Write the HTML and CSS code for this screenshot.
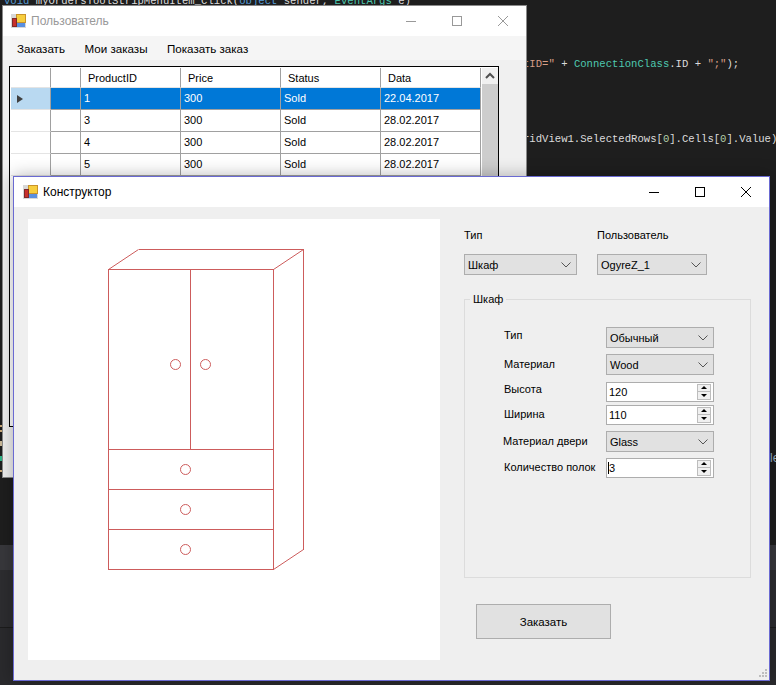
FILE: index.html
```html
<!DOCTYPE html>
<html>
<head>
    <meta charset="utf-8">
    <link rel="stylesheet" href="styles.css">
</head>
<body>
    <div class="editor">
        <div class="code-line top-line"><span class="kw">void</span> myOrdersToolStripMenuItem_Click(<span class="kw">object</span> sender, <span class="type">EventArgs</span> e)</div>
        <div class="code-line line-a"><span class="str">tID="</span> + <span class="type">ConnectionClass</span>.ID + <span class="str">";"</span>);</div>
        <div class="code-line line-b">ridView1.SelectedRows[<span class="num">0</span>].Cells[<span class="num">0</span>].Value)</div>
    </div>
    <div class="band band-tab"></div>
    <div class="band band-mid"></div>
    <div class="band band-low"></div>

    <i class="mark mark-a"></i>
    <i class="mark mark-b"></i>
    <i class="mark mark-c"></i>
    <i class="mark mark-d"></i>
    <i class="mark mark-e"></i>
    <div class="side-text">le</div>

    <!-- back window -->
    <div class="window user-window">
        <div class="titlebar">
            <svg class="app-icon" width="16" height="16" viewBox="0 0 16 16">
                <rect x="0" y="1" width="15" height="14" fill="#d8d8d8"/>
                <rect x="5.500" y="1.500" width="9" height="8" fill="#f7ce3e" stroke="#c9932a"/>
                <rect x="1.500" y="5.500" width="4" height="8" fill="#c8302c" stroke="#7d2a2a"/>
                <rect x="6" y="10" width="8" height="4" fill="#5a8fe0"/>
            </svg>
            <span class="title">Пользователь</span>
            <div class="controls">
                <svg width="46" height="16" viewBox="0 0 46 16"><path d="M18 8.5h10" stroke="#999"/></svg>
                <svg width="46" height="16" viewBox="0 0 46 16"><rect x="18.5" y="3.5" width="9" height="9" fill="none" stroke="#999"/></svg>
                <svg width="46" height="16" viewBox="0 0 46 16"><path d="M18 3l10 10M28 3L18 13" stroke="#999" fill="none"/></svg>
            </div>
        </div>
        <div class="menu">
            <span>Заказать</span>
            <span>Мои заказы</span>
            <span>Показать заказ</span>
        </div>
        <div class="grid-box">
            <div class="data-grid">
                <div class="row head">
                    <div class="rh"></div><div class="c0"></div>
                    <div>ProductID</div><div>Price</div><div>Status</div><div>Data</div>
                </div>
                <div class="row selected">
                    <div class="rh"><b class="arrow"></b></div><div class="c0"></div>
                    <div>1</div><div>300</div><div>Sold</div><div>22.04.2017</div>
                </div>
                <div class="row">
                    <div class="rh"></div><div class="c0"></div>
                    <div>3</div><div>300</div><div>Sold</div><div>28.02.2017</div>
                </div>
                <div class="row">
                    <div class="rh"></div><div class="c0"></div>
                    <div>4</div><div>300</div><div>Sold</div><div>28.02.2017</div>
                </div>
                <div class="row">
                    <div class="rh"></div><div class="c0"></div>
                    <div>5</div><div>300</div><div>Sold</div><div>28.02.2017</div>
                </div>
            </div>
            <div class="scrollbar">
                <div class="scroll-btn">
                    <svg width="16" height="16" viewBox="0 0 16 16"><path d="M4 10l4-4 4 4" fill="none" stroke="#505050" stroke-width="2"/></svg>
                </div>
                <div class="scroll-thumb"></div>
            </div>
        </div>
    </div>

    <!-- front window -->
    <div class="window builder-window">
        <div class="titlebar">
            <svg class="app-icon" width="16" height="16" viewBox="0 0 16 16">
                <rect x="0" y="1" width="15" height="14" fill="#d8d8d8"/>
                <rect x="5.500" y="1.500" width="9" height="8" fill="#f7ce3e" stroke="#c9932a"/>
                <rect x="1.500" y="5.500" width="4" height="8" fill="#c8302c" stroke="#7d2a2a"/>
                <rect x="6" y="10" width="8" height="4" fill="#5a8fe0"/>
            </svg>
            <span class="title">Конструктор</span>
            <div class="controls">
                <svg width="46" height="16" viewBox="0 0 46 16"><path d="M18 8.5h10" stroke="#000"/></svg>
                <svg width="46" height="16" viewBox="0 0 46 16"><rect x="18.5" y="3.5" width="9" height="9" fill="none" stroke="#000"/></svg>
                <svg width="46" height="16" viewBox="0 0 46 16"><path d="M18 3l10 10M28 3L18 13" stroke="#000" fill="none"/></svg>
            </div>
        </div>
        <div class="builder-body">
            <div class="canvas">
                <svg width="412" height="441" viewBox="28 219 412 441" class="wardrobe">
                    <g fill="none" stroke="#cd5c5c" shape-rendering="crispEdges">
                        <rect x="108.5" y="269.5" width="165" height="300"/>
                        <path d="M138.5 249.5H303.5V549.5"/>
                        <path d="M190.5 269.5V449.5M108.5 449.5H273.5M108.5 489.5H273.5M108.5 529.5H273.5"/>
                    </g>
                    <g fill="none" stroke="#cd5c5c">
                        <path d="M108.5 269.5L138.5 249.5M273.5 269.5L303.5 249.5M273.5 569.5L303.5 549.5"/>
                        <circle cx="175.5" cy="364.5" r="5"/>
                        <circle cx="205.5" cy="364.5" r="5"/>
                        <circle cx="185.5" cy="469.5" r="5"/>
                        <circle cx="185.5" cy="509.5" r="5"/>
                        <circle cx="185.5" cy="549.5" r="5"/>
                    </g>
                </svg>
            </div>
            <div class="panel">
                <div class="top-fields">
                    <label>Тип</label>
                    <label>Пользователь</label>
                    <div class="combo combo-type">Шкаф <svg class="chev" width="10" height="6" viewBox="0 0 10 6"><path d="M0.5 0.5L5 5l4.500-4.500" fill="none" stroke="#555"/></svg></div>
                    <div class="combo combo-user">OgyreZ_1 <svg class="chev" width="10" height="6" viewBox="0 0 10 6"><path d="M0.5 0.5L5 5l4.500-4.500" fill="none" stroke="#555"/></svg></div>
                </div>
                <fieldset class="group">
                    <legend>Шкаф</legend>
                    <div class="form-row">
                        <span class="lbl lbl-up">Тип</span>
                        <div class="combo">Обычный <svg class="chev" width="10" height="6" viewBox="0 0 10 6"><path d="M0.5 0.5L5 5l4.500-4.500" fill="none" stroke="#555"/></svg></div>
                    </div>
                    <div class="form-row gap-6">
                        <span class="lbl">Материал</span>
                        <div class="combo">Wood <svg class="chev" width="10" height="6" viewBox="0 0 10 6"><path d="M0.5 0.5L5 5l4.500-4.500" fill="none" stroke="#555"/></svg></div>
                    </div>
                    <div class="form-row gap-6">
                        <span class="lbl lbl-up">Высота</span>
                        <div class="spin"><span class="spin-val">120</span><div class="spin-btns"><b class="up"></b><b class="down"></b></div></div>
                    </div>
                    <div class="form-row gap-2">
                        <span class="lbl">Ширина</span>
                        <div class="spin"><span class="spin-val">110</span><div class="spin-btns"><b class="up"></b><b class="down"></b></div></div>
                    </div>
                    <div class="form-row gap-6">
                        <span class="lbl lbl-left">Материал двери</span>
                        <div class="combo">Glass <svg class="chev" width="10" height="6" viewBox="0 0 10 6"><path d="M0.5 0.5L5 5l4.500-4.500" fill="none" stroke="#555"/></svg></div>
                    </div>
                    <div class="form-row row-short gap-6">
                        <span class="lbl">Количество полок</span>
                        <div class="spin"><span class="spin-val caret">3</span><div class="spin-btns"><b class="up"></b><b class="down"></b></div></div>
                    </div>
                </fieldset>
                <button class="order-btn">Заказать</button>
            </div>
        </div>
        <svg class="grip" width="10" height="10" viewBox="0 0 10 10">
            <g fill="#bdbdbd">
                <rect x="7" y="0" width="2" height="2"/>
                <rect x="4" y="3" width="2" height="2"/><rect x="7" y="3" width="2" height="2"/>
                <rect x="1" y="6" width="2" height="2"/><rect x="4" y="6" width="2" height="2"/><rect x="7" y="6" width="2" height="2"/>
            </g>
        </svg>
    </div>
</body>
</html>
```

FILE: styles.css
```css
* {
    box-sizing: border-box;
}
html, body {
    margin: 0;
    height: 685px;
    overflow: hidden;
}
body {
    position: relative;
    background-color: #1e1e1e;
    font-family: "Liberation Sans", Arial, sans-serif;
    font-size: 11px;
    color: #000;
}

/* editor behind the windows */
.editor {
    height: 545px;
    overflow: hidden;
}
.code-line {
    font-family: "Liberation Mono", monospace;
    font-size: 10.6px;
    line-height: 14px;
    height: 14px;
    color: #dcdcdc;
    white-space: pre;
}
.top-line {
    margin-top: -6px;
    padding-left: 4px;
}
.line-a {
    margin-top: 49px;
    padding-left: 523px;
}
.line-b {
    margin-top: 61px;
    padding-left: 523px;
}
.kw { color: #569cd6; }
.type { color: #4ec9b0; }
.str { color: #d69d85; }
.num { color: #b5cea8; }

.band-tab {
    height: 25px;
    background-color: #38383c;
}
.band-mid {
    height: 58px;
    background-color: #2d2d30;
    border-bottom: 1px solid #1c1c1c;
}
.band-low {
    height: 57px;
    background-color: #2a2a2d;
}
.mark {
    position: absolute;
    left: 0;
    width: 2px;
    height: 2px;
    background-color: #c8a878;
}
.mark-a { top: 425px; }
.mark-b { top: 430px; }
.mark-c { top: 441px; height: 5px; background-color: #c8b898; }
.mark-d { top: 456px; height: 5px; background-color: #2fb488; }
.mark-e { top: 470px; }
.side-text {
    position: absolute;
    left: 770px;
    top: 451px;
    font-size: 12px;
    color: #9cb4c4;
}

/* windows */
.window {
    position: absolute;
    background-color: #f0f0f0;
}
.user-window {
    left: 2px;
    top: 5px;
    width: 525px;
    height: 473px;
    border: 1px solid #8a8a8a;
}
.builder-window {
    left: 13px;
    top: 176px;
    width: 757px;
    height: 505px;
    background-color: #efefef;
    border: 1px solid #6a6ad2;
    box-shadow: 0 0 16px rgba(0, 0, 0, 0.3);
}
.titlebar {
    display: flex;
    align-items: center;
    height: 30px;
    padding-left: 9px;
    background-color: #fff;
}
.user-window .titlebar {
    padding-left: 8px;
}
.title {
    margin-left: 4px;
    font-size: 12px;
}
.user-window .title {
    color: #999;
}
.controls {
    display: flex;
    margin-left: auto;
}
.menu {
    display: flex;
    gap: 19.5px;
    align-items: center;
    height: 24px;
    padding-left: 14px;
    font-size: 11.6px;
    background-color: #f5f5f5;
}

/* data grid */
.grid-box {
    display: flex;
    width: 490px;
    height: 361px;
    margin: 6px 0 0 6px;
    padding: 1px 0 1px 1px;
    background-color: #fff;
    border: 1px solid #000;
}
.data-grid {
    width: 470px;
}
.row {
    display: grid;
    grid-template-columns: 40px 30px 100px 100px 100px 100px;
    height: 22px;
}
.row div {
    padding: 3px 0 0 3px;
    line-height: 14px;
    background-color: #fff;
    border-right: 1px solid #a0a0a0;
    border-bottom: 1px solid #a0a0a0;
}
.row .rh {
    border-bottom-color: #e4e4e4;
}
.row.head {
    height: 20px;
}
.row.head div {
    padding: 3px 0 0 7px;
    border-bottom-color: #e4e4e4;
}
.row.selected div {
    background-color: #0078d7;
    color: #fff;
}
.row.selected .rh {
    position: relative;
    background-color: #b9d9f1;
}
.arrow {
    position: absolute;
    left: 6px;
    top: 7px;
    border-left: 6px solid #404040;
    border-top: 4.5px solid transparent;
    border-bottom: 4.5px solid transparent;
}
.scrollbar {
    width: 17px;
    margin-left: 1px;
}
.scroll-btn {
    height: 16px;
    background-color: #f0f0f0;
}
.scroll-btn svg {
    display: block;
}
.scroll-thumb {
    height: 100%;
    background-color: #cdcdcd;
}

/* builder form */
.builder-body {
    display: flex;
    gap: 24px;
    padding: 12px 14px;
}
.canvas {
    width: 412px;
    height: 441px;
    background-color: #fff;
}
.wardrobe {
    display: block;
}
.panel {
    width: 287px;
}
.top-fields {
    display: grid;
    grid-template-columns: 133px 110px;
    padding-top: 9px;
}
.top-fields label {
    height: 26px;
    line-height: 14px;
}
.combo {
    position: relative;
    display: flex;
    align-items: center;
    height: 21px;
    padding-left: 3px;
    background-color: #e1e1e1;
    border: 1px solid #adadad;
}
.combo-type {
    width: 113px;
}
.combo-user {
    width: 110px;
}
.chev {
    position: absolute;
    right: 5px;
    top: 7px;
}
.group {
    width: 287px;
    height: 286px;
    margin: 17px 0 0;
    padding: 21px 0 0;
    border: 1px solid #dcdcdc;
}
.group legend {
    margin-left: 5px;
    padding: 0 3px;
    line-height: 14px;
}
.form-row {
    display: grid;
    grid-template-columns: 102px 108px;
    align-items: center;
    height: 21px;
    margin-left: 39px;
}
.row-short {
    height: 20px;
}
.gap-2 { margin-top: 2px; }
.gap-6 { margin-top: 6px; }
.lbl {
    margin-top: -2px;
}
.lbl-up {
    margin-top: -6px;
}
.lbl-left {
    margin-left: -1px;
}
.spin {
    display: flex;
    align-self: end;
    align-items: center;
    justify-content: space-between;
    height: 20px;
    padding: 0 1px;
    background-color: #fff;
    border: 1px solid #adadad;
}
.spin-val {
    padding-left: 1px;
}
.caret {
    border-left: 1px solid #000;
    padding-left: 0;
}
.spin-btns {
    display: flex;
    flex-direction: column;
    width: 14px;
    height: 16px;
    margin-right: 1px;
}
.spin-btns b {
    position: relative;
    display: block;
    height: 8px;
    background-color: #f0f0f0;
    border: 1px solid #bdbdbd;
}
.spin-btns .down {
    border-top: none;
}
.spin-btns b::after {
    content: "";
    position: absolute;
    left: 3px;
    top: 1px;
    border-left: 3px solid transparent;
    border-right: 3px solid transparent;
}
.spin-btns .up::after {
    border-bottom: 3px solid #000;
}
.spin-btns .down::after {
    top: 2px;
    border-top: 3px solid #000;
}
.order-btn {
    display: block;
    width: 135px;
    height: 35px;
    margin: 26px 0 0 12px;
    padding: 0;
    font-family: inherit;
    font-size: 11.5px;
    color: #000;
    background-color: #e1e1e1;
    border: 1px solid #adadad;
}
.grip {
    position: absolute;
    right: 1px;
    bottom: 1px;
}
```
